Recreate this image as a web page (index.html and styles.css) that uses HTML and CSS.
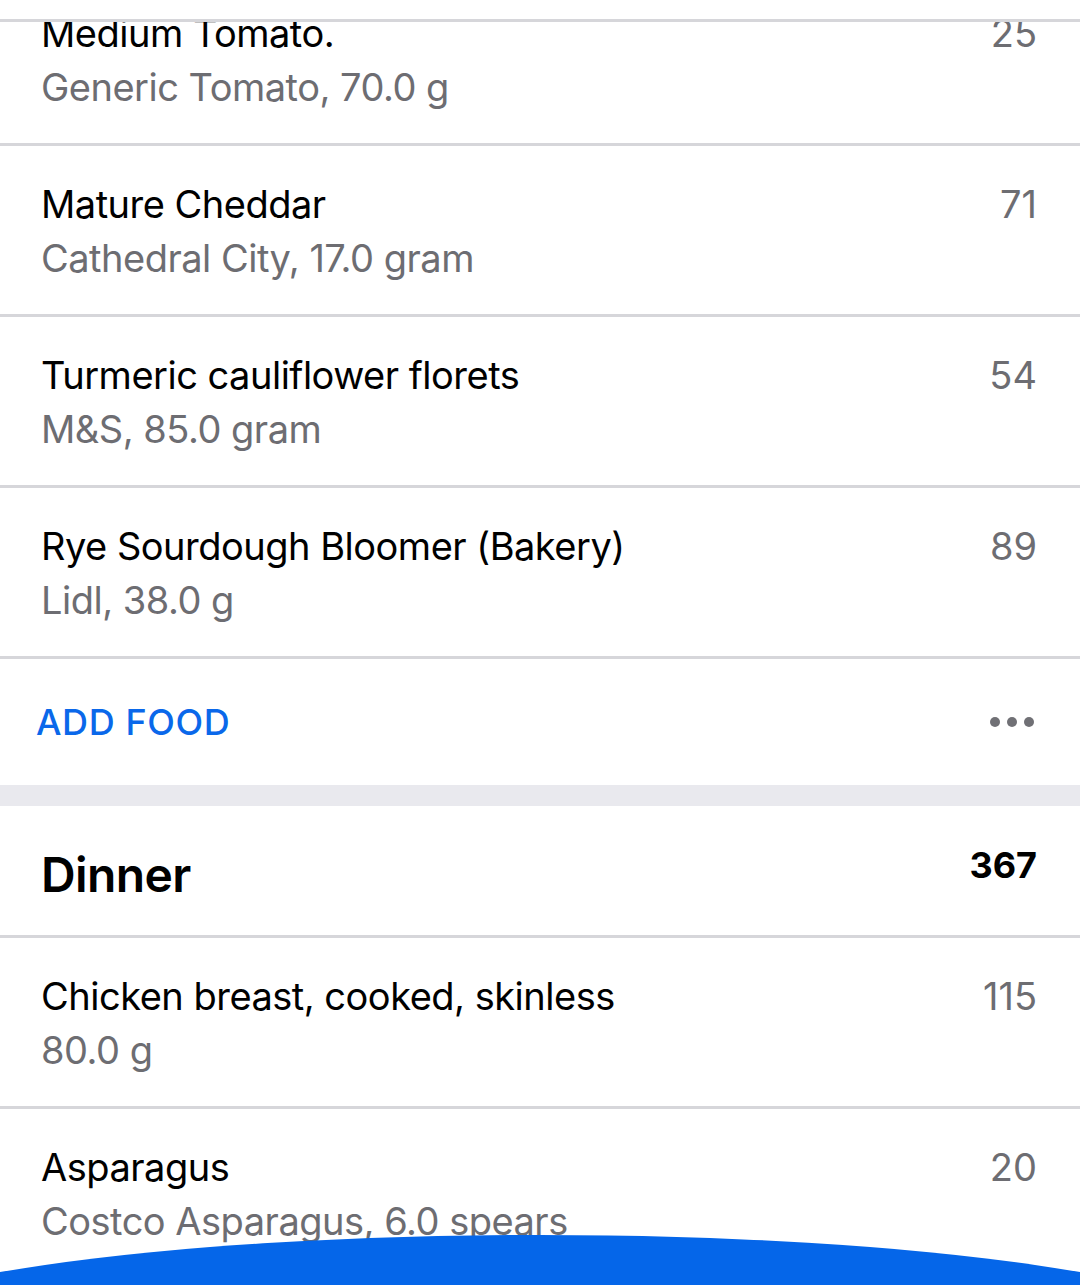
FILE: index.html
```html
<!DOCTYPE html>
<html lang="en">
<head>
<meta charset="utf-8">
<title>Diary</title>
<link rel="stylesheet" href="styles.css">
</head>
<body>
<div class="screen">
  <div class="topbar"></div>
  <div class="list">
    <div class="entry first">
      <div class="entry-text">
        <div class="entry-name">Medium Tomato.</div>
        <div class="entry-sub">Generic Tomato, 70.0 g</div>
      </div>
      <div class="entry-cal">25</div>
    </div>
    <div class="entry">
      <div class="entry-text">
        <div class="entry-name">Mature Cheddar</div>
        <div class="entry-sub">Cathedral City, 17.0 gram</div>
      </div>
      <div class="entry-cal">71</div>
    </div>
    <div class="entry">
      <div class="entry-text">
        <div class="entry-name">Turmeric cauliflower florets</div>
        <div class="entry-sub">M&amp;S, 85.0 gram</div>
      </div>
      <div class="entry-cal">54</div>
    </div>
    <div class="entry">
      <div class="entry-text">
        <div class="entry-name">Rye Sourdough Bloomer (Bakery)</div>
        <div class="entry-sub">Lidl, 38.0 g</div>
      </div>
      <div class="entry-cal">89</div>
    </div>
    <div class="add-row">
      <span class="add-food">ADD FOOD</span>
      <span class="more"><i></i><i></i><i></i></span>
    </div>
    <div class="section-gap"></div>
    <div class="meal-head">
      <div class="meal-title">Dinner</div>
      <div class="meal-total">367</div>
    </div>
    <div class="entry">
      <div class="entry-text">
        <div class="entry-name">Chicken breast, cooked, skinless</div>
        <div class="entry-sub">80.0 g</div>
      </div>
      <div class="entry-cal">115</div>
    </div>
    <div class="entry">
      <div class="entry-text">
        <div class="entry-name">Asparagus</div>
        <div class="entry-sub">Costco Asparagus, 6.0 spears</div>
      </div>
      <div class="entry-cal">20</div>
    </div>
  </div>
  <div class="fab-arc"></div>
</div>
</body>
</html>
```
FILE: styles.css
```css
* { box-sizing: border-box; }
html, body {
  margin: 0;
  padding: 0;
  background: #ffffff;
}
body {
  font-family: Inter, "Noto Sans", "Liberation Sans", sans-serif;
  color: #000;
}
.screen {
  position: relative;
  width: 1080px;
  height: 1285px;
  overflow: hidden;
  background: #fff;
}
.topbar {
  position: absolute;
  left: 0;
  top: 0;
  width: 100%;
  height: 22px;
  background: #fff;
  border-bottom: 3px solid #d6d6da;
  z-index: 2;
}
.list {
  margin-top: -25px;
  display: flex;
  flex-direction: column;
}
.entry {
  display: flex;
  justify-content: space-between;
  align-items: flex-start;
  height: 171px;
  padding: 31px 43px 0 41px;
  border-top: 3px solid #d6d6da;
}
.entry.first { border-top: none; height: 168px; }
.entry-name, .entry-sub, .entry-cal {
  font-size: 38px;
  line-height: 54px;
  letter-spacing: -0.5px;
  white-space: nowrap;
}
.entry-name { color: #000; }
.entry-sub { color: #6d6d72; }
.entry-cal { color: #6d6d72; letter-spacing: 0; }
.add-row {
  display: flex;
  justify-content: space-between;
  align-items: center;
  height: 129px;
  padding: 0 46px 0 36px;
  border-top: 3px solid #d6d6da;
}
.add-food {
  color: #0a68ea;
  font-size: 36px;
  font-weight: 500;
  letter-spacing: 0.6px;
}
.more {
  display: flex;
  gap: 7px;
}
.more i {
  display: block;
  width: 10px;
  height: 10px;
  border-radius: 50%;
  background: #707075;
}
.section-gap {
  height: 21px;
  background: #e9e9ee;
}
.meal-head {
  display: flex;
  justify-content: space-between;
  align-items: flex-start;
  height: 129px;
  padding: 0 43px 0 41px;
}
.meal-title {
  font-size: 48px;
  font-weight: 600;
  line-height: 58px;
  letter-spacing: -0.6px;
  padding-top: 40px;
}
.meal-total {
  font-size: 36px;
  font-weight: 700;
  line-height: 42px;
  padding-top: 38px;
}
.fab-arc {
  position: absolute;
  left: -160px;
  top: 1235px;
  width: 1400px;
  height: 204px;
  border-radius: 50%;
  background: #0566e9;
  z-index: 3;
}
```
